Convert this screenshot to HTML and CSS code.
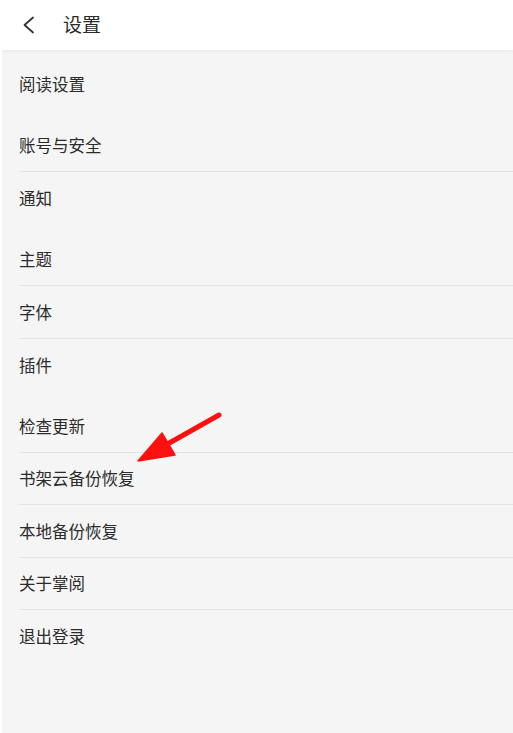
FILE: index.html
```html
<!DOCTYPE html>
<html lang="zh-CN">
<head>
<meta charset="utf-8">
<title>设置</title>
<link rel="stylesheet" href="styles.css">
</head>
<body>
<div class="page">
  <header class="topbar">
    <svg class="back" width="14" height="18" viewBox="0 0 14 18"><path d="M11 1.5 L2.5 9 L11 16.5" fill="none" stroke="#333" stroke-width="1.8" stroke-linecap="round" stroke-linejoin="round"/></svg>
    <h1 class="title">设置</h1>
  </header>
  <main class="list">
    <section class="group">
      <div class="row">阅读设置</div>
    </section>
    <section class="group">
      <div class="row">账号与安全</div>
      <div class="row">通知</div>
    </section>
    <section class="group">
      <div class="row">主题</div>
      <div class="row">字体</div>
      <div class="row">插件</div>
    </section>
    <section class="group">
      <div class="row">检查更新</div>
      <div class="row">书架云备份恢复</div>
      <div class="row">本地备份恢复</div>
      <div class="row">关于掌阅</div>
      <div class="row">退出登录</div>
    </section>
  </main>
  <svg class="arrow" width="513" height="733" viewBox="0 0 513 733">
    <line x1="219" y1="415" x2="164" y2="446" stroke="#ff1010" stroke-width="5" stroke-linecap="round"/>
    <polygon points="138,461 162,433 175,455" fill="#ff1010" stroke="#ff1010" stroke-width="1.5" stroke-linejoin="round"/>
  </svg>
</div>
</body>
</html>
```
FILE: styles.css
```css
html, body {
  margin: 0;
  padding: 0;
  background: #ffffff;
}
body {
  font-family: "Noto Sans CJK SC", "Noto Sans", sans-serif;
  color: #2b2b2b;
}
.page {
  position: relative;
  width: 511px;
  height: 733px;
  margin-left: 2px;
  background: #f5f5f5;
  overflow: hidden;
}
.topbar {
  height: 50px;
  background: #ffffff;
  display: flex;
  align-items: center;
  box-shadow: 0 1px 5px rgba(0, 0, 0, 0.06);
  position: relative;
  z-index: 1;
}
.back {
  margin-left: 20px;
}
.title {
  margin: 0 0 3px 27px;
  font-size: 19px;
  font-weight: 400;
  color: #2b2b2b;
  line-height: 1;
}
.list {
  padding-top: 8px;
  display: flex;
  flex-direction: column;
  gap: 9px;
}
.group {
  display: flex;
  flex-direction: column;
}
.row {
  box-sizing: border-box;
  height: 52.5px;
  margin-left: 17px;
  display: flex;
  align-items: center;
  font-size: 16.5px;
  color: #2b2b2b;
  border-bottom: 1px solid #e4e4e4;
}
.row:last-child {
  border-bottom: none;
}
.arrow {
  position: absolute;
  left: -2px;
  top: 0;
  pointer-events: none;
  z-index: 2;
}
```
